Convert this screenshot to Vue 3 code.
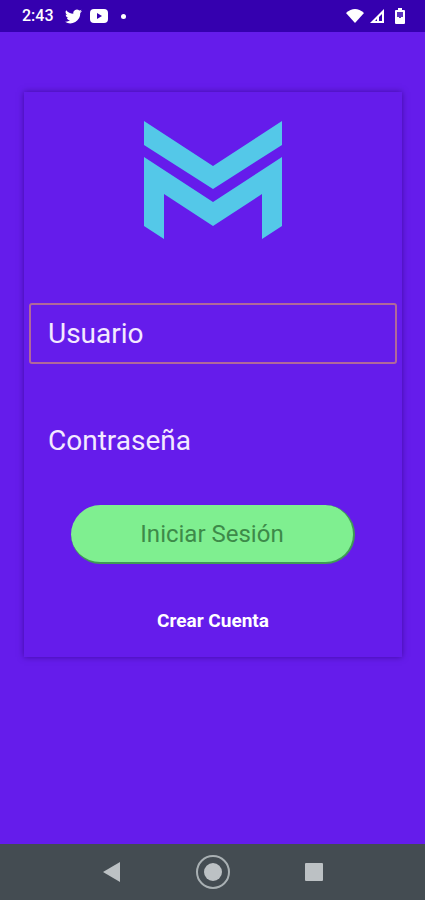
<script setup>
import { ref } from 'vue'

const user = ref('')
const password = ref('')
</script>

<template>
  <div class="screen">
    <header class="status">
      <span class="time">2:43</span>
      <svg class="bird" width="17" height="15" viewBox="0 0 24 20" aria-hidden="true">
        <path fill="#fff" d="M23.9 2.4c-.9.4-1.8.6-2.8.8 1-.6 1.800-1.600 2.200-2.700-1 .6-2 1-3.100 1.200A4.900 4.900 0 0 0 11.800 6.100C7.700 5.900 4.100 4 1.700 1A4.900 4.900 0 0 0 3.200 7.600c-.8 0-1.600-.3-2.200-.6 0 2.400 1.600 4.400 3.900 4.900-.7.200-1.500.2-2.200.1.600 2 2.400 3.400 4.600 3.400A9.900 9.900 0 0 1 0 17.400 14 14 0 0 0 21.500 5c1-.7 1.800-1.600 2.400-2.600z" />
      </svg>
      <svg class="video" width="18" height="14" viewBox="0 0 18 14" aria-hidden="true">
        <rect width="18" height="14" rx="4" fill="#fff" />
        <path d="M7 4l5 3-5 3z" fill="#3500af" />
      </svg>
      <span class="dot"></span>
      <svg class="wifi" width="20" height="16" viewBox="0 0 20 16" aria-hidden="true">
        <path d="M1 5Q10-3 19 5L10 15z" fill="#fff" />
      </svg>
      <svg class="signal" width="16" height="16" viewBox="0 0 16 16" aria-hidden="true">
        <path d="M15 1v14H1z" fill="#fff" />
        <path d="M13 6v7h-3V9z" fill="#3500af" />
        <path d="M8 11v2H6z" fill="#3500af" />
      </svg>
      <svg class="battery" width="10" height="16" viewBox="0 0 10 16" aria-hidden="true">
        <path d="M3 0h4v2h2q1 0 1 1v12q0 1-1 1H1q-1 0-1-1V3q0-1 1-1h2z" fill="#fff" />
        <path d="M2 4h6v5H6v1H4V9H2z" fill="#3500af" opacity=".8" />
      </svg>
    </header>

    <main class="content">
      <form class="card" @submit.prevent>
        <svg class="logo" width="138" height="118" viewBox="0 0 138 118" aria-hidden="true">
          <path d="M0 0L69 45 138 0V24L69 68 0 24z" />
          <path d="M0 36L69 81 138 36V105L118 118V73L69 105 20 73V118L0 105z" />
        </svg>
        <input v-model="user" class="field focused" type="text" placeholder="Usuario" aria-label="Usuario" />
        <input v-model="password" class="field" type="password" placeholder="Contraseña" aria-label="Contraseña" />
        <button class="submit" type="submit">Iniciar Sesión</button>
        <a class="create" href="#">Crear Cuenta</a>
      </form>
    </main>

    <nav class="navbar">
      <button class="nav" type="button" aria-label="Atrás">
        <svg width="36" height="36" viewBox="0 0 36 36"><path d="M9 18L26 8V28z" fill="#bcc1c4" /></svg>
      </button>
      <button class="nav" type="button" aria-label="Inicio">
        <svg width="36" height="36" viewBox="0 0 36 36">
          <circle cx="18" cy="18" r="16" fill="none" stroke="#a9b0b3" stroke-width="2" />
          <circle cx="18" cy="18" r="9" fill="#bcc1c4" />
        </svg>
      </button>
      <button class="nav" type="button" aria-label="Recientes">
        <svg width="36" height="36" viewBox="0 0 36 36"><rect x="9" y="9" width="18" height="18" rx="1" fill="#bcc1c4" /></svg>
      </button>
    </nav>
  </div>
</template>

<style>
body {
  margin: 0;
}
</style>

<style scoped>
.screen {
  box-sizing: border-box;
  min-height: 100vh;
  display: flex;
  flex-direction: column;
  background: #651ceb;
  color: #fff;
  font-family: Roboto, sans-serif;
}

.status {
  display: flex;
  align-items: center;
  height: 32px;
  padding: 0 20px 0 22px;
  background: #3500af;
}

.time {
  font-size: 16px;
  line-height: 32px;
  font-weight: 500;
}

.bird {
  margin-left: 11px;
}

.video {
  margin-left: 8px;
}

.dot {
  width: 5px;
  height: 5px;
  margin-left: 13px;
  border-radius: 50%;
  background: #fff;
}

.wifi {
  margin-left: auto;
}

.signal {
  margin-left: 4px;
}

.battery {
  margin-left: 10px;
}

.content {
  flex: 1;
  padding: 60px 23px 60px 24px;
}

.card {
  display: flex;
  flex-direction: column;
  padding: 29px 5px 24px;
  box-shadow: 0 0 6px rgba(40, 0, 110, 0.6);
  background: #651ceb;
}

.logo {
  align-self: center;
  fill: #54c8e8;
  margin-bottom: 64px;
}

.field {
  box-sizing: border-box;
  width: 100%;
  height: 61px;
  margin-bottom: 46px;
  padding: 0 17px;
  border: 2px solid transparent;
  border-radius: 3px;
  outline: none;
  background: transparent;
  color: #f3e9ff;
  font-family: inherit;
  font-size: 28px;
}

.field::placeholder {
  color: #f3e9ff;
  opacity: 1;
}

.focused {
  border-color: #b0689a;
}

.field + .submit {
  margin-top: -12px;
}

.submit {
  height: 59px;
  margin: 0 42px;
  border: solid #3f9a55;
  border-width: 0 2px 2px 0;
  border-radius: 30px;
  background: #7fef90;
  color: #3d8a49;
  font-family: inherit;
  font-size: 24px;
}

.create {
  align-self: center;
  margin-top: 44px;
  color: #fff;
  font-size: 19px;
  line-height: 25px;
  font-weight: 700;
  text-decoration: none;
}

.navbar {
  display: flex;
  align-items: center;
  justify-content: center;
  gap: 65px;
  height: 56px;
  background: #444c52;
}

.nav {
  display: flex;
  padding: 0;
  border: 0;
  background: none;
}
</style>
